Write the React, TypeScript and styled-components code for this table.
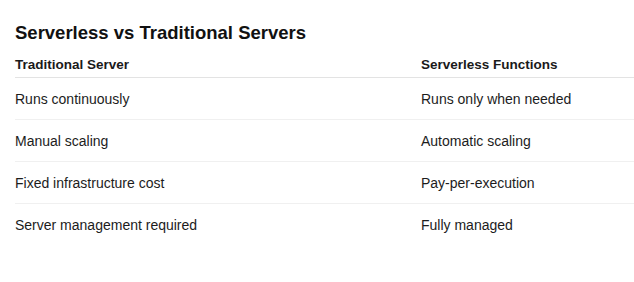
import { Fragment } from "react";
import styled, { createGlobalStyle } from "styled-components";

const GlobalStyle = createGlobalStyle`
  body {
    margin: 0;
    background: #fff;
    font-family: "Liberation Sans", Arial, sans-serif;
    color: #1a1a1a;
  }
`;

const Page = styled.div`
  padding: 19px 0 0 15px;
`;

const Title = styled.h2`
  margin: 0 0 4px;
  font-size: 18.5px;
  font-weight: 700;
  line-height: 28px;
  color: #111;
`;

const Table = styled.div`
  display: grid;
  grid-template-columns: 406px 1fr;
`;

const HeadCell = styled.div`
  font-size: 13.5px;
  font-weight: 700;
  line-height: 18px;
  padding: 5px 0 3px;
  border-bottom: 1px solid #e3e3e3;
`;

const Cell = styled.div<{ $last?: boolean }>`
  font-size: 14px;
  line-height: 17px;
  padding: 13px 0 11px;
  color: #1c1c1c;
  border-bottom: 1px solid ${(p) => (p.$last ? "transparent" : "#f0f0f0")};
`;

const rows = [
  ["Runs continuously", "Runs only when needed"],
  ["Manual scaling", "Automatic scaling"],
  ["Fixed infrastructure cost", "Pay-per-execution"],
  ["Server management required", "Fully managed"],
];

export default function App() {
  return (
    <>
      <GlobalStyle />
      <Page>
        <Title>Serverless vs Traditional Servers</Title>
        <Table>
          <HeadCell>Traditional Server</HeadCell>
          <HeadCell>Serverless Functions</HeadCell>
          {rows.map((r, i) => (
            <Fragment key={i}>
              <Cell $last={i === rows.length - 1}>{r[0]}</Cell>
              <Cell $last={i === rows.length - 1}>{r[1]}</Cell>
            </Fragment>
          ))}
        </Table>
      </Page>
    </>
  );
}
